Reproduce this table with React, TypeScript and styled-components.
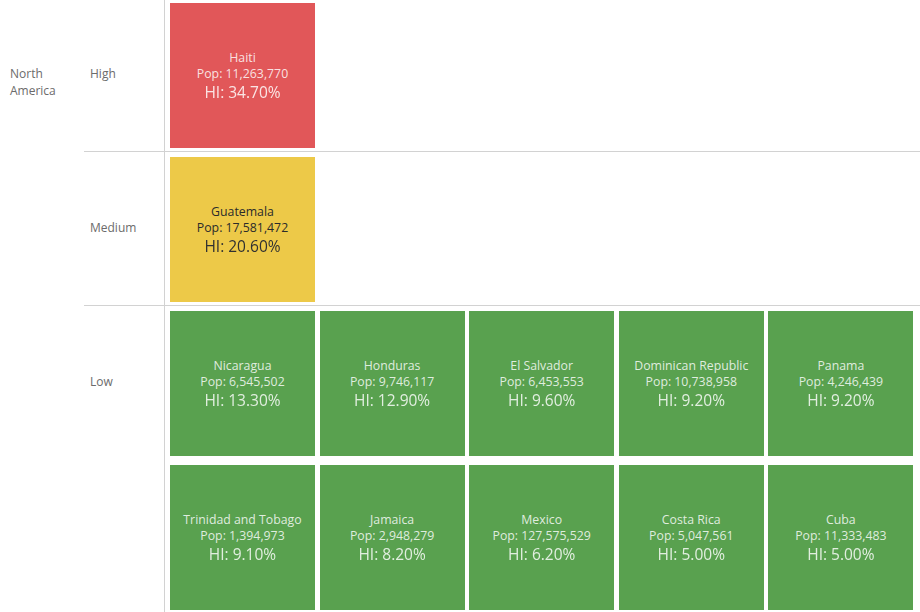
import * as React from 'react';
import styled, { createGlobalStyle } from 'styled-components';

type Level = 'high' | 'medium' | 'low';

interface Country {
  name: string;
  pop: string;
  hi: string;
}

const ROWS: { label: string; level: Level; countries: Country[] }[] = [
  { label: 'High', level: 'high', countries: [{ name: 'Haiti', pop: '11,263,770', hi: '34.70%' }] },
  { label: 'Medium', level: 'medium', countries: [{ name: 'Guatemala', pop: '17,581,472', hi: '20.60%' }] },
  {
    label: 'Low',
    level: 'low',
    countries: [
      { name: 'Nicaragua', pop: '6,545,502', hi: '13.30%' },
      { name: 'Honduras', pop: '9,746,117', hi: '12.90%' },
      { name: 'El Salvador', pop: '6,453,553', hi: '9.60%' },
      { name: 'Dominican Republic', pop: '10,738,958', hi: '9.20%' },
      { name: 'Panama', pop: '4,246,439', hi: '9.20%' },
      { name: 'Trinidad and Tobago', pop: '1,394,973', hi: '9.10%' },
      { name: 'Jamaica', pop: '2,948,279', hi: '8.20%' },
      { name: 'Mexico', pop: '127,575,529', hi: '6.20%' },
      { name: 'Costa Rica', pop: '5,047,561', hi: '5.00%' },
      { name: 'Cuba', pop: '11,333,483', hi: '5.00%' },
    ],
  },
];

const TILE_BG: Record<Level, string> = {
  high: '#e15759',
  medium: '#edc948',
  low: '#59a14f',
};

const TILE_FG: Record<Level, string> = {
  high: 'rgba(255, 255, 255, 0.84)',
  medium: '#2b2b2b',
  low: 'rgba(255, 255, 255, 0.82)',
};

const App: React.FC = () => {
  return (
    <>
      <GlobalStyle />
      <Wrapper>
        <RegionCol>
          <RegionLabel>
            North
            <br />
            America
          </RegionLabel>
        </RegionCol>
        <Rows>
          {ROWS.map((row, i) => (
            <Row key={row.label} last={i === ROWS.length - 1}>
              <RowLabel first={i === 0}>
                <span>{row.label}</span>
              </RowLabel>
              <Pane first={i === 0}>
                {row.countries.map((c) => (
                  <Tile key={c.name} level={row.level}>
                    <Name>{c.name}</Name>
                    <Pop>Pop: {c.pop}</Pop>
                    <Hi>HI: {c.hi}</Hi>
                  </Tile>
                ))}
              </Pane>
            </Row>
          ))}
        </Rows>
      </Wrapper>
    </>
  );
};

const GlobalStyle = createGlobalStyle`
  html, body {
    margin: 0;
    padding: 0;
    background: #ffffff;
  }
  body {
    font-family: 'Open Sans', 'Noto Sans', sans-serif;
  }
`;

const Wrapper = styled.div`
  display: flex;
  width: 920px;
  height: 612px;
  overflow: hidden;
  background: #ffffff;
`;

const RegionCol = styled.div`
  width: 84px;
  flex-shrink: 0;
  box-sizing: border-box;
  padding: 65px 0 0 10px;
`;

const RegionLabel = styled.div`
  color: #6b6b6b;
  font-size: 12px;
  line-height: 17px;
`;

const Rows = styled.div`
  flex: 1;
  display: flex;
  flex-direction: column;
`;

const Row = styled.div<{ last: boolean }>`
  display: flex;
  flex: ${(p) => (p.last ? 1 : 'none')};
  border-bottom: ${(p) => (p.last ? 'none' : '1px solid #d2d2d2')};
`;

const RowLabel = styled.div<{ first: boolean }>`
  width: 81px;
  flex-shrink: 0;
  border-right: 1px solid #d2d2d2;
  box-sizing: border-box;
  padding: ${(p) => (p.first ? '3px' : '5px')} 0 0 6px;
  color: #6b6b6b;
  font-size: 12px;
  span {
    display: flex;
    align-items: center;
    height: 141px;
  }
`;

const Pane = styled.div<{ first: boolean }>`
  display: grid;
  grid-template-columns: repeat(5, 145px);
  grid-auto-rows: 145px;
  column-gap: 4.6px;
  row-gap: 9px;
  align-content: start;
  padding: ${(p) => (p.first ? '3px' : '5px')} 0 3px 5px;
`;

const Tile = styled.div<{ level: Level }>`
  display: flex;
  flex-direction: column;
  align-items: center;
  justify-content: center;
  background: ${(p) => TILE_BG[p.level]};
  color: ${(p) => TILE_FG[p.level]};
  text-align: center;
  box-sizing: border-box;
`;

const Name = styled.div`
  font-size: 12.3px;
  line-height: 16px;
`;

const Pop = styled.div`
  font-size: 12.3px;
  line-height: 16px;
`;

const Hi = styled.div`
  font-size: 15.5px;
  line-height: 20px;
  filter: brightness(1.15);
`;

export default App;
